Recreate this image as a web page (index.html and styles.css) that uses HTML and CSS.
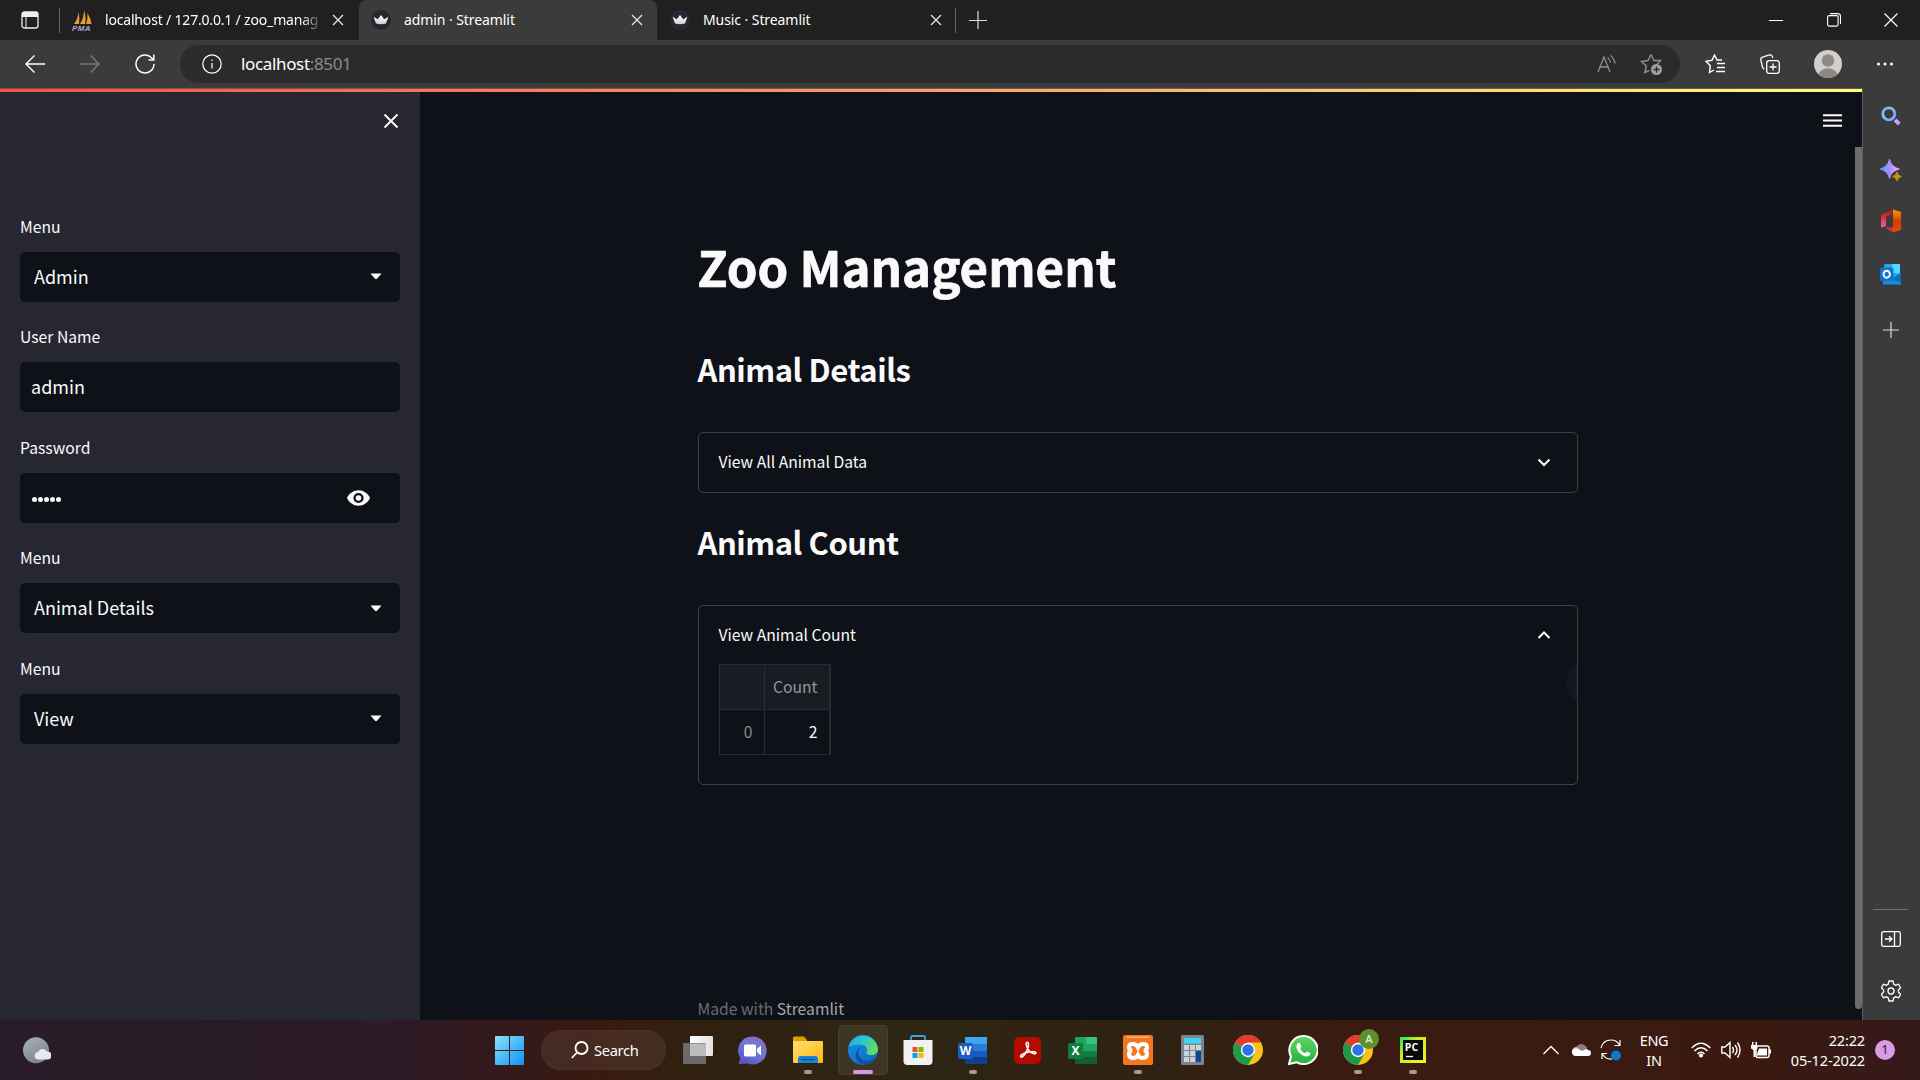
FILE: index.html
```
<!DOCTYPE html>
<html lang="en">
<head>
<meta charset="utf-8">
<title>admin · Streamlit</title>
<link rel="stylesheet" href="styles.css">
</head>
<body>
<svg width="0" height="0" class="defs">
  <defs>
    <linearGradient id="gWin" x1="0" y1="0" x2="1" y2="1"><stop offset="0" stop-color="#8be3fb"/><stop offset="1" stop-color="#0b93f5"/></linearGradient>
    <linearGradient id="gChat" x1="1" y1="0" x2="0.3" y2="1"><stop offset="0" stop-color="#8b6ab8"/><stop offset="0.5" stop-color="#7279d8"/><stop offset="1" stop-color="#5558c4"/></linearGradient>
    <linearGradient id="gFold" x1="0" y1="0" x2="1" y2="1"><stop offset="0" stop-color="#ffdf70"/><stop offset="1" stop-color="#fdb813"/></linearGradient>
    <linearGradient id="gEdgeTop" x1="0" y1="0.2" x2="1" y2="0.6"><stop offset="0" stop-color="#2aa9e0"/><stop offset="0.5" stop-color="#30c8c8"/><stop offset="1" stop-color="#65e052"/></linearGradient>
    <linearGradient id="gEdge" x1="0" y1="0" x2="0.6" y2="1"><stop offset="0" stop-color="#1b95d8"/><stop offset="1" stop-color="#0b6bd0"/></linearGradient>
    <linearGradient id="gGlass" x1="0" y1="0" x2="1" y2="1"><stop offset="0" stop-color="#7fa6ff"/><stop offset="0.4" stop-color="#7ec8f5"/><stop offset="0.75" stop-color="#6aa8ff"/><stop offset="1" stop-color="#c69cff"/></linearGradient>
    <linearGradient id="gStar" x1="0" y1="0.4" x2="1" y2="0.3"><stop offset="0" stop-color="#5fa0ff"/><stop offset="0.5" stop-color="#a98bff"/><stop offset="1" stop-color="#f4b6ff"/></linearGradient>
    <linearGradient id="gOff" x1="0" y1="0" x2="0" y2="1"><stop offset="0" stop-color="#ff9a00"/><stop offset="0.5" stop-color="#d83b01"/><stop offset="1" stop-color="#e64a0b"/></linearGradient>
    <linearGradient id="gOffL" x1="0" y1="0" x2="0" y2="1"><stop offset="0" stop-color="#b01010"/><stop offset="0.5" stop-color="#e0303f"/><stop offset="1" stop-color="#e86ab0"/></linearGradient>
    <linearGradient id="gMoon" x1="0" y1="0" x2="0.5" y2="1"><stop offset="0" stop-color="#a9b2bc"/><stop offset="1" stop-color="#7d868e"/></linearGradient>
    <linearGradient id="gPy" x1="0" y1="0" x2="1" y2="1"><stop offset="0" stop-color="#10e868"/><stop offset="0.35" stop-color="#c8ec1c"/><stop offset="1" stop-color="#f2f02c"/></linearGradient>
    <linearGradient id="gWa" x1="0" y1="0" x2="0" y2="1"><stop offset="0" stop-color="#5fd669"/><stop offset="1" stop-color="#24b43c"/></linearGradient>
    <linearGradient id="gCrown" x1="0" y1="0" x2="0" y2="1"><stop offset="0" stop-color="#fff"/><stop offset="1" stop-color="#cfcfcf"/></linearGradient>
    <symbol id="crown" viewBox="0 0 20 20"><circle cx="10" cy="10" r="10" fill="#262730"/><path d="M2.600 6.800L6.800 9.200 10 5l3.200 4.200L17.400 6.800 15 13.500q-5 1.600-10 0z" fill="url(#gCrown)"/></symbol>
    <symbol id="x" viewBox="0 0 12 12"><path d="M1 1l10 10M11 1L1 11" stroke="#e8e8e8" stroke-width="1.300" fill="none"/></symbol>
    <symbol id="chrome" viewBox="0 0 30 30">
      <circle cx="15" cy="15" r="15" fill="#fbc116"/>
      <path d="M15 15L2 7.500A15 15 0 0 0 15 30l6.500-11.300z" fill="#1f9a48"/>
      <path d="M15 15L2 7.500A15 15 0 0 1 28 7.500H15z" fill="#e33b2e"/>
      <circle cx="15" cy="15" r="7.200" fill="#fff"/><circle cx="15" cy="15" r="5.700" fill="#2b74e8"/>
    </symbol>
    <symbol id="caret" viewBox="0 0 12 7"><path d="M.5.500h11L7 5.800q-1 .8-2 0z" fill="#fafafa"/></symbol>
  </defs>
</svg>

<div class="screen">
  <header class="tabstrip">
    <div class="tab-actions"><svg width="18" height="18" viewBox="0 0 18 18"><rect x="1" y="1" width="16" height="16" rx="2.500" fill="none" stroke="#eee" stroke-width="1.300"/><path d="M1 3.500Q1 1 3.500 1h11Q17 1 17 3.500V6H1z" fill="#eee"/><path d="M5 6v11" stroke="#eee"/></svg></div>
    <i class="divider"></i>
    <div class="tab first">
      <svg class="fav" width="21" height="21" viewBox="0 0 21 21"><path d="M2 14Q6 9 6.500 2q1.500 6 .5 12zM8 14Q12 8 12 0q2.500 8 1 14zM14 14q2-5 1.500-11 3.500 6 4 11z" fill="#f09a35"/><text x="0" y="20.500" class="pma">PMA</text></svg>
      <span class="tab-title fade">localhost / 127.0.0.1 / zoo_manag</span>
      <svg width="12" height="12"><use href="#x"/></svg>
    </div>
    <div class="tab active">
      <svg class="fav" width="20" height="20"><use href="#crown"/></svg>
      <span class="tab-title s">admin · Streamlit</span>
      <svg width="12" height="12"><use href="#x"/></svg>
    </div>
    <div class="tab last">
      <svg class="fav" width="20" height="20"><use href="#crown"/></svg>
      <span class="tab-title s">Music · Streamlit</span>
      <svg width="12" height="12"><use href="#x"/></svg>
    </div>
    <i class="divider"></i>
    <div class="newtab"><svg width="18" height="18"><path d="M0 9.500h18M9 0v18" stroke="#ddd" stroke-width="1.200"/></svg></div>
    <div class="winctl">
      <svg width="14" height="14"><path d="M0 7.500h14" stroke="#fff"/></svg>
      <svg width="14" height="14"><rect x=".6" y="2.600" width="10.500" height="10.500" rx="1.500" fill="none" stroke="#fff" stroke-width="1.100"/><path d="M3 .6h7.500q3 0 3 3V11" fill="none" stroke="#fff" stroke-width="1.100"/></svg>
      <svg width="14" height="14"><path d="M.5.500l13 13M13.500.500l-13 13" stroke="#fff" stroke-width="1.200"/></svg>
    </div>
  </header>

  <div class="toolbar">
    <div class="tool"><svg width="20" height="18" fill="none" stroke="#fff" stroke-width="1.400"><path d="M20 9H1M9.500.5L1 9l8.500 8.500"/></svg></div>
    <div class="tool"><svg width="20" height="18" fill="none" stroke="#7b7b7b" stroke-width="1.400"><path d="M0 9h19M10.500.5L19 9l-8.500 8.500"/></svg></div>
    <div class="tool"><svg width="20" height="20" fill="none" stroke="#fff" stroke-width="1.500"><path d="M19 10A9 9 0 1 1 16.500 3.700L18.500 6"/><path d="M18.800.500V6H13.500"/></svg></div>
    <div class="address">
      <svg width="20" height="20" fill="none" stroke="#fff" stroke-width="1.200"><circle cx="10" cy="10" r="9.200"/><path d="M10 9v5.500M10 5.500v1.500"/></svg>
      <span class="url">localhost<b>:8501</b></span>
      <svg class="read" width="20" height="20" fill="none" stroke="#8f8f8f" stroke-width="1.300"><path d="M1 18L7 3l6 15M3 13h8"/><path d="M10.500 3.500q2.500 1.500 3 5M13.500 1.500q3.500 2.500 4.500 8" /></svg>
      <svg class="addfav" width="23" height="23"><path d="M11 1.500l3 6h6.500l-3.500 4M11 1.500l-3 6-6.500 1 4.800 4.700-1.500 6.300 4.500-2" fill="none" stroke="#8f8f8f" stroke-width="1.400"/><circle cx="16.500" cy="16.500" r="5.500" fill="#a0a0a0"/><path d="M13.500 16.500h6M16.500 13.500v6" stroke="#2b2b2b" stroke-width="1.300"/></svg>
    </div>
    <div class="tool t1"><svg width="20" height="20" fill="none" stroke="#fff" stroke-width="1.400"><path d="M17 6h-5L9.500 1 7 6.300 1 7.300l4.300 4.400L4.500 18.500 9 16M12 9.500h8M12 13.500h8M11 17.500h9" /></svg></div>
    <div class="tool"><svg width="20" height="20" fill="none" stroke="#fff" stroke-width="1.300"><rect x="6.700" y="6.700" width="12.600" height="12.600" rx="2.500"/><path d="M13 9.500v7M9.500 13h7M4.500 15Q3 15 2.500 13L.8 5.800Q.5 4 2.500 3.200L9.500 1q2-.5 2.800 1.500l.4 1.500"/></svg></div>
    <div class="tool t2"><svg width="28" height="28"><circle cx="14" cy="14" r="14" fill="#d0cfcd"/><circle cx="14" cy="10.500" r="6.200" fill="#8d8884"/><path d="M4.500 24.300a9.600 7 0 0 1 19 0A14 14 0 0 1 4.500 24.300z" fill="#8d8884"/></svg></div>
    <div class="tool"><svg width="18" height="4" fill="#fff"><circle cx="2.500" cy="2" r="1.500"/><circle cx="9" cy="2" r="1.500"/><circle cx="15.500" cy="2" r="1.500"/></svg></div>
  </div>

  <div class="middle">
    <div class="page">
      <div class="rainbow"></div>
      <aside class="side">
        <div class="side-close"><svg width="16" height="16"><path d="M1.500 1.500l13 13M14.500 1.500l-13 13" stroke="#fafafa" stroke-width="1.900"/></svg></div>
        <div class="field"><label>Menu</label><div class="box"><span>Admin</span><svg width="12" height="7"><use href="#caret"/></svg></div></div>
        <div class="field"><label>User Name</label><div class="box input"><span>admin</span></div></div>
        <div class="field"><label>Password</label><div class="box input"><span class="dots"><i></i><i></i><i></i><i></i><i></i></span><svg class="eye" width="25" height="16" viewBox="0 0 24 16"><path d="M12 .3C7 .3 2.600 3.400.500 8 2.600 12.600 7 15.700 12 15.700S21.400 12.600 23.500 8C21.400 3.400 17 .3 12 .3z" fill="#fafafa"/><circle cx="12" cy="8" r="5.100" fill="#0e1117"/><circle cx="12" cy="8" r="2.800" fill="#fafafa"/></svg></div></div>
        <div class="field"><label>Menu</label><div class="box"><span>Animal Details</span><svg width="12" height="7"><use href="#caret"/></svg></div></div>
        <div class="field"><label>Menu</label><div class="box"><span>View</span><svg width="12" height="7"><use href="#caret"/></svg></div></div>
      </aside>
      <main class="main">
        <div class="content">
          <h1>Zoo Management</h1>
          <h2>Animal Details</h2>
          <section class="expander">
            <div class="summary"><span>View All Animal Data</span><svg width="14" height="9"><path d="M1.500 1.500L7 7l5.500-5.500" fill="none" stroke="#fafafa" stroke-width="2"/></svg></div>
          </section>
          <h2 class="second">Animal Count</h2>
          <section class="expander open">
            <div class="summary"><span>View Animal Count</span><svg width="14" height="9"><path d="M1.500 7L7 1.500 12.500 7" fill="none" stroke="#fafafa" stroke-width="2"/></svg></div>
            <div class="grid"><div class="th"></div><div class="th">Count</div><div class="idx">0</div><div>2</div></div>
            <div class="halo"></div>
          </section>
          <footer>Made with <b>Streamlit</b></footer>
        </div>
      </main>
      <div class="rail">
        <svg class="burger" width="19" height="14"><path d="M0 1.200h19M0 6.500h19M0 11.800h19" stroke="#fafafa" stroke-width="2"/></svg>
        <div class="thumb"></div>
      </div>
    </div>
    <nav class="edgebar">
      <svg width="20" height="20"><circle cx="7.800" cy="7.800" r="6" fill="none" stroke="url(#gGlass)" stroke-width="2.800"/><path d="M14 14l4.300 4" stroke="#c9a0ff" stroke-width="3.800"/></svg>
      <svg class="discover" width="22" height="22"><path d="M9.500.5Q11 8 19 10 11 12 9.500 19 8 12 .3 10 8 8 9.500.500z" fill="url(#gStar)" stroke="url(#gStar)" stroke-width="1.200" stroke-linejoin="round"/><path d="M17 13q.8 3.500 4.500 4.500Q17.800 18.500 17 22q-.8-3.500-4.500-4.500Q16.200 16.500 17 13z" fill="#c8960c" stroke="#c8960c" stroke-width=".8"/></svg>
      <svg class="office" width="22" height="24"><path d="M1 6L12 0v5L6 7.500V17l-5 1.500z" fill="url(#gOffL)"/><path d="M13 .5L21 3v18l-8 2.500z" fill="url(#gOff)"/><path d="M5 18.500h8v5z" fill="#e0304a"/></svg>
      <svg class="outlook" width="22" height="21"><rect x="4" y="0" width="16" height="18" rx="1.500" fill="#28a8ea"/><rect x="12" y="0" width="8" height="9" fill="#50d9ff"/><path d="M3 20.500V11l9 4 9-6v10.500q0 1-1 1z" fill="#1490df"/><path d="M12 15l9-6v10z" fill="#0f6cbd"/><rect x="0" y="3.500" width="13.500" height="13.500" rx="1.500" fill="#0f74d0"/><ellipse cx="6.700" cy="10.200" rx="3.200" ry="3.500" fill="none" stroke="#fff" stroke-width="1.900"/></svg>
      <svg class="plus" width="16" height="16"><path d="M0 8h16M8 0v16" stroke="#ddd" stroke-width="1.200"/></svg>
      <div class="edge-bottom">
        <i></i>
        <svg width="20" height="16" fill="none" stroke="#fff" stroke-width="1.300"><rect x=".7" y=".7" width="18.600" height="14.600" rx="1.800"/><path d="M13.500 1v14M4 8h7M8 5.200L11 8l-3 2.800"/></svg>
        <svg width="20" height="22" viewBox="0 0 20 22" fill="none" stroke="#fff" stroke-width="1.300"><path d="M8 1h4l.7 3 2 1.200 2.900-1 2 3.500L17.400 10v2l2.200 2.300-2 3.500-2.900-1-2 1.200-.7 3H8l-.7-3-2-1.200-2.900 1-2-3.500L2.600 12v-2L.4 7.700l2-3.500 2.900 1 2-1.200z"/><circle cx="10" cy="11" r="3"/></svg>
      </div>
    </nav>
  </div>

  <div class="taskbar">
    <div class="weather"><svg width="28" height="27"><circle cx="13" cy="13.200" r="13" fill="url(#gMoon)"/><path d="M15 22.500a4 3.800 0 0 1 0-7.500 5 5 0 0 1 9-.5 4 4 0 0 1 1 8z" fill="#e6eaee"/></svg></div>
    <div class="start"><svg width="29" height="29"><path d="M0 1q0-1 1-1h13v14H0zM15 0h13q1 0 1 1v13H15zM0 15h14v14H1q-1 0-1-1zM15 15h14v13q0 1-1 1H15z" fill="url(#gWin)"/></svg></div>
    <div class="search"><svg width="18" height="18" fill="none" stroke="#fff" stroke-width="1.800"><circle cx="10.500" cy="7" r="6"/><path d="M6 11.500L.8 17"/></svg><span>Search</span></div>
    <div class="apps">
      <div><svg width="30" height="28"><defs><linearGradient id="gTv" x1="0" x2="1"><stop offset="0" stop-color="#fff"/><stop offset="1" stop-color="#e2e2e2"/></linearGradient></defs><rect x="7" y="0" width="23" height="20" rx="1" fill="url(#gTv)"/><rect x="0" y="7" width="23" height="21" rx="1" fill="#6c6a68"/><rect x="7" y="7.500" width="16" height="12.500" fill="#bdbcbb"/></svg></div>
      <div><svg width="29" height="29"><path d="M14.500.5a14 14 0 1 1-5 27L.5 28l1.800-6A14 14 0 0 1 14.500.500z" fill="url(#gChat)"/><rect x="6" y="8.500" width="12" height="12" rx="1.500" fill="#fff"/><path d="M19 13l4-3.500v10L19 16z" fill="#fff"/></svg></div>
      <div class="run"><svg width="30" height="28"><path d="M0 2q0-1.500 1.500-1.500H11L14 4v6H0z" fill="#e09c00"/><rect x="0" y="5" width="30" height="22" rx="1" fill="url(#gFold)"/><path d="M5 27v-4q0-3 3-3h14q3 0 3 3v4z" fill="#1484d8"/><path d="M8.500 23.500h13" stroke="#064a8c" stroke-width="1.300"/></svg></div>
      <div class="run current"><svg width="30" height="30"><circle cx="15" cy="15" r="15" fill="url(#gEdge)"/><path d="M.5 12A15 15 0 0 1 30 14c0 4-3 6-7 6-3.500 0-5-1.200-4.500-2.300 2.200-3.600-1-8.200-6.500-8.200C7 9.500 2.500 10.500.500 12z" fill="url(#gEdgeTop)"/><path d="M13.500 11.500c-5.500 4-3.500 11 1.500 13.500 5 2.200 9 0 12.500-2.500q-3 5-8 6.800C11 31 6.500 24 8 18q1.500-5 5.500-6.500z" fill="#12509c"/></svg></div>
      <div><svg width="30" height="30"><path d="M8 7V2.500Q8 1 9.500 1h11Q22 1 22 2.500V7" fill="none" stroke="#29abe2" stroke-width="1.800"/><path d="M.5 5h29v21q0 4-4 4h-21q-4 0-4-4z" fill="#f1f1f1"/><path fill="#f25022" d="M9.500 12h5v5h-5z"/><path fill="#7fba00" d="M15.500 12h5v5h-5z"/><path fill="#00a4ef" d="M9.500 18h5v5h-5z"/><path fill="#ffb900" d="M15.500 18h5v5h-5z"/></svg></div>
      <div class="run"><svg width="29" height="27"><path fill="#41a5ee" d="M7 0h22v7H7z"/><path fill="#2b7cd3" d="M7 7h22v7H7z"/><path fill="#185abd" d="M7 14h22v6H7z"/><path fill="#103f91" d="M7 20h22v7H7z"/><rect y="6" width="15" height="16" rx="1.500" fill="#1a5dbe"/><text x="7.500" y="18" class="off">W</text></svg></div>
      <div><svg width="27" height="27"><rect width="27" height="27" rx="5" fill="#b30b00"/><path d="M12 6.500q1.500-2.500 2.500 0 .3 4-3 9.500-2.700 4.700-4.800 4-1.200-1.700 4.300-4 4.500-1.700 9.500-1.200 2.500 1 .7 2-3 .3-5.700-2.500-3.200-3.500-3.500-7.800z" fill="none" stroke="#fff" stroke-width="1.500"/></svg></div>
      <div><svg width="29" height="27"><path fill="#21a366" d="M7 0h11v7H7z"/><path fill="#33c481" d="M18 0h11v7H18z"/><path fill="#21a366" d="M7 7h22v7H7z"/><path fill="#107c41" d="M7 14h22v6H7z"/><path fill="#185c37" d="M7 20h22v7H7z"/><rect y="6" width="15" height="16" rx="1.500" fill="#107c41"/><text x="7.500" y="18" class="off">X</text></svg></div>
      <div class="run"><svg width="30" height="30"><rect width="30" height="30" rx="2" fill="#f5761f"/><path d="M4 1.500h22v1.500H4z" fill="#f9b27c"/><path d="M10 9q-4.500 0-4 3.500 0 2.500 3 3-3 .5-3 3.500 0 4 4.500 4 3 0 4.500-3 1.500 3 4.500 3 4.500 0 4.500-4 0-3-3-3.500 3-.5 3-3Q24.500 9 20 9q-3.500 0-5 3.500Q13.500 9 10 9z" fill="none" stroke="#fff" stroke-width="4"/></svg></div>
      <div><svg width="23" height="30"><rect width="23" height="30" rx="1.500" fill="#7b8591"/><rect x="3" y="3" width="17" height="5.500" fill="#3fd3f8"/><path d="M3 10h5v5H3zM9 10h5v5H9zM15 10h5v5h-5zM3 16h5v5H3zM9 16h5v5H9zM3 22h5v5H3zM9 22h5v5H9z" fill="#ccd3da"/><path d="M15 16h5v11h-5z" fill="#12468c"/></svg></div>
      <div><svg width="30" height="30"><use href="#chrome"/></svg></div>
      <div><svg width="30" height="30"><path d="M15.500 1a14 14 0 1 1-6.500 26.300L1 29l2-7.500A14 14 0 0 1 15.500 1z" fill="url(#gWa)" stroke="#fff" stroke-width="2"/><path d="M9.500 8.500c1-1.200 2.300-1 2.800.3l1 2.500c.3.800-1 1.700-1 2.400 1 2.200 2.700 3.600 4.700 4.400.8 0 1.500-1.700 2.200-1.700l2.800 1.400c.8.700.3 2.200-.7 3-3 2-7 0-9.700-2.700C8.500 15 7.500 11 9.500 8.500z" fill="#fff"/></svg></div>
      <div class="run"><svg width="30" height="30"><use href="#chrome"/></svg><em>A</em></div>
      <div class="run"><svg width="26" height="26"><rect width="26" height="26" fill="url(#gPy)"/><rect x="3" y="3" width="20" height="20" fill="#080808"/><text x="4.800" y="13.500" class="pc">PC</text><path d="M6 19.500h7" stroke="#fff" stroke-width="1.300"/></svg></div>
    </div>
    <div class="tray">
      <div class="tc"><svg width="16" height="10"><path d="M.5 9L8 1.500 15.500 9" fill="none" stroke="#fff" stroke-width="1.300"/></svg></div>
      <div class="tc"><svg width="20" height="14"><path d="M1 9a5 5 0 0 1 5-5.500A6 6 0 0 1 16 5l-6 5z" fill="#a8a09c"/><path d="M4 13a4 4 0 0 1-1-7.500q3-1 5 1 2.500 1.500 4-.5a4 4 0 0 1 5 1 3 3 0 0 1 0 6z" fill="#fff"/><path d="M6 3.500q3-4.500 8-1l2 3-5 2.500z" fill="#877d79"/></svg></div>
      <div class="tc"><svg width="22" height="22"><path d="M1 9Q3 1 11 1q6 0 8.500 5M20 1v5.500h-5.500M7 14.500H2V20M2.500 15Q6 21 12 20" fill="none" stroke="#fff" stroke-width="1.200"/><circle cx="16" cy="16.500" r="5" fill="#0a78d6"/></svg></div>
      <div class="lang">ENG<br>IN</div>
      <div class="tc"><svg width="20" height="16" fill="none" stroke="#fff" stroke-width="1.600"><path d="M.8 6Q10-3.500 19.200 6M3.500 9Q10 2.500 16.500 9M6.500 12Q10 8.500 13.500 12"/><circle cx="10" cy="13.500" r="1.300" fill="#fff"/></svg></div>
      <div class="tc"><svg width="20" height="18" fill="none" stroke="#fff" stroke-width="1.400"><path d="M.8 6H4L9 1.500v15L4 12H.8z"/><path d="M11.500 6q2 3 0 6M14 4q4 5 0 10M16.500 1.500q5 7.500 0 15"/></svg></div>
      <div class="tc"><svg width="20" height="17"><rect x="5" y="4" width="13" height="11.500" rx="2" fill="none" stroke="#fff" stroke-width="1.500"/><path d="M8 6.500h8v7H5.500z" fill="#fff"/><path d="M18 7.500h2v4h-2zM0 3h6.500v3.500L4.500 8v7H2.500V8L0 6.500zM1 0h1.500v3H1zM4.500 0H6v3H4.500z" fill="#fff"/></svg></div>
      <div class="clock">22:22<br><span>05-12-2022</span></div>
      <div class="badge">1</div>
    </div>
  </div>
</div>
</body>
</html>
```
FILE: styles.css
```
* { box-sizing: border-box; }
body { margin: 0; background: #0e1117; overflow: hidden; font-family: "Noto Sans", "Open Sans", sans-serif; }
svg { display: block; flex: none; }
.defs { position: absolute; }
.screen { width: 1920px; height: 1080px; display: flex; flex-direction: column; }

/* browser tabs */
.tabstrip { height: 40px; background: #202020; display: flex; align-items: center; flex: none; }
.tab-actions { width: 59px; display: flex; justify-content: center; }
.divider { width: 1px; height: 25px; background: #666; flex: none; }
.tab { width: 298px; height: 40px; display: flex; align-items: center; padding: 0 14px 0 12px; color: #fff; font-size: 14px; }
.tab.first { width: 299px; padding-right: 15px; }
.tab.last { padding: 0 13px 0 13px; }
.tab.active { background: #3b3b3b; border-radius: 8px 8px 0 0; }
.tab-title { margin: 0 9px 0 12px; flex: 1; white-space: nowrap; overflow: hidden; letter-spacing: -.18px; line-height: 20px; }
.tab-title.s { margin-left: 13px; letter-spacing: -.08px; }
.fade { -webkit-mask-image: linear-gradient(90deg, #000 90%, transparent); mask-image: linear-gradient(90deg, #000 90%, transparent); }
.pma { font: italic bold 8px "Liberation Sans", sans-serif; fill: #a9a9d6; letter-spacing: .4px; }
.newtab { width: 44px; display: flex; justify-content: center; }
.winctl { margin-left: auto; padding-right: 22px; display: flex; gap: 43.500px; }

/* browser toolbar */
.toolbar { height: 48px; background: #3b3b3b; display: flex; align-items: center; padding-left: 7px; flex: none; }
.tool { width: 55px; display: flex; justify-content: center; }
.tool.t1 { margin-left: 7px; }
.tool.t2 { width: 58px; margin-left: 2px; }
.address { width: 1500px; height: 38px; margin-left: 8px; border-radius: 19px; background: #2b2b2b; display: flex; align-items: center; padding: 0 17px 0 22px; }
.url { flex: 1; margin-left: 19px; color: #fff; font-size: 17px; letter-spacing: -.35px; line-height: 24px; }
.url b { color: #8c8c8c; font-weight: 400; }
.read { margin-right: 23px; }

/* page frame */
.middle { height: 932px; display: flex; flex: none; }
.page { width: 1863px; position: relative; display: flex; border-top: 1px solid #5d5d60; border-right: 1px solid #5d5d60; overflow: hidden; font-family: "Noto Sans CJK SC", sans-serif; color: #fafafa; }
.rainbow { position: absolute; left: 0; top: 0; width: 100%; height: 3px; background: linear-gradient(90deg, #ff4b4b, #ff8c5a 40%, #fffd80); }
.side { width: 420px; background: #262730; padding: 24px 20px 0; flex: none; }
.side-close { height: 101.600px; display: flex; justify-content: flex-end; padding-right: 1.500px; }
.field { height: 110.500px; }
.field label { display: block; height: 37px; font-size: 15.700px; line-height: 24px; }
.box { height: 50px; background: #0e1117; border-radius: 5px; display: flex; align-items: center; justify-content: space-between; padding: 0 18px 0 14px; font-size: 18px; line-height: 28px; }
.box span { padding-bottom: 2px; }
.box.input { padding: 0 29px 0 11px; }
.box .dots { display: flex; gap: 1px; padding: 3px 0 0 1px; }
.dots i { width: 5px; height: 5px; border-radius: 50%; background: #fafafa; }
.main { flex: 1; display: flex; justify-content: center; }
.content { width: 880px; margin-left: 33px; height: 931px; display: flex; flex-direction: column; padding-top: 144px; }
h1 { margin: 0; font-size: 49.200px; font-weight: 700; line-height: 65px; height: 115px; white-space: nowrap; -webkit-text-stroke: .7px #fafafa; }
h2 { margin: 0; font-size: 31px; font-weight: 600; line-height: 42px; height: 84px; white-space: nowrap; letter-spacing: -.45px; }
h2.second { margin-top: 28px; }
.expander { height: 61px; flex: none; border: 1px solid #3e4045; border-radius: 5px; position: relative; }
.expander.open { height: 180px; overflow: hidden; }
.summary { height: 58px; padding: 0 26px 0 20px; display: flex; align-items: center; justify-content: space-between; font-size: 15.700px; line-height: 24px; }
.grid { width: 112px; margin-left: 20px; display: grid; grid-template-columns: 45px 64px; grid-template-rows: 45px 44px; border: 1px solid #282b32; border-right-width: 2px; font-size: 15.700px; line-height: 24px; }
.grid div { display: flex; align-items: center; justify-content: flex-end; padding-right: 11px; border-bottom: 1px solid #282b32; }
.grid div:nth-child(odd) { border-right: 1px solid #282b32; }
.grid div:nth-child(n+3) { border-bottom: 0; }
.grid .th { background: #1a1c23; color: #96979b; }
.grid .idx { color: #86888c; }
.halo { position: absolute; right: -27px; top: 55px; width: 38px; height: 42px; border-radius: 50%; background: #13171f; }
footer { margin-top: auto; height: 24px; margin-bottom: -1px; font-size: 15.700px; line-height: 24px; color: #6b6d72; white-space: nowrap; }
footer b { font-weight: 400; color: #a5a6aa; }
.rail { width: 40px; display: flex; flex-direction: column; flex: none; padding-top: 25px; }
.burger { margin-left: 1px; }
.thumb { width: 7px; height: 862px; margin: 19px 0 0 auto; background: #6b6c70; border-radius: 0 0 4px 4px; }

/* browser side bar */
.edgebar { width: 57px; background: #3b3b3b; display: flex; flex-direction: column; align-items: center; padding: 18px 1.500px 0 0; }
.discover { margin-top: 33px; }
.office { margin-top: 28px; }
.outlook { margin-top: 31px; }
.plus { margin-top: 37px; }
.edge-bottom { margin-top: auto; display: flex; flex-direction: column; align-items: center; padding-bottom: 18px; }
.edge-bottom i { width: 35px; height: 1px; background: #707070; margin-bottom: 21px; }
.edge-bottom svg + svg { margin-top: 33px; }

/* taskbar */
.taskbar { height: 60px; flex: none; display: flex; align-items: center; color: #fff; background: linear-gradient(90deg, #291c29 0, #291c24 200px, #2d1b27 380px, #32191d 480px, #3a1a10 600px, #31200f 690px, #2e2513 900px, #2f2213 1150px, #3a1b11 1350px, #3b1910 1750px, #35191a 1920px); }
.weather { width: 487px; padding-left: 23px; }
.start { width: 54px; padding-left: 8px; }
.search { width: 125px; height: 40px; border-radius: 20px; background: rgba(255,255,255,.07); border: 1px solid rgba(255,255,255,.04); display: flex; align-items: center; padding-left: 29px; gap: 5px; font-size: 14.700px; letter-spacing: -.35px; }
.apps { display: flex; margin-left: 4px; }
.apps > div { width: 55px; height: 50px; display: flex; align-items: center; justify-content: center; position: relative; }
.apps .run::after { content: ""; position: absolute; bottom: 1px; left: 23.500px; width: 8px; height: 4px; border-radius: 2px; background: #a39b94; }
.apps .current { width: 50px; margin: 0 2.500px; border-radius: 5px; background: rgba(255,255,255,.08); border: 1px solid rgba(255,255,255,.06); }
.apps .current::after { left: 14px; bottom: 0; width: 20px; background: #d899e0; }
.off { font: bold 12px "Open Sans", sans-serif; fill: #fff; text-anchor: middle; }
.pc { font: bold 10.500px "Open Sans", sans-serif; fill: #fff; }
.apps em { position: absolute; left: 29px; top: 4px; width: 20px; height: 20px; border-radius: 50%; background: #5c8f2e; color: #dbe8cd; font: 600 11px/20px "Noto Sans", sans-serif; text-align: center; }
.tray { margin-left: auto; display: flex; align-items: center; padding-right: 25px; font-size: 14.500px; line-height: 20px; }
.tc { width: 30px; display: flex; justify-content: center; }
.lang { width: 60px; text-align: center; letter-spacing: -.3px; padding-right: 4px; }
.clock { width: 89px; text-align: right; letter-spacing: -.15px; white-space: nowrap; }
.badge { width: 20px; height: 20px; border-radius: 50%; background: #d99be3; color: #1b1b1b; font-size: 12px; text-align: center; margin-left: 10px; }
```
